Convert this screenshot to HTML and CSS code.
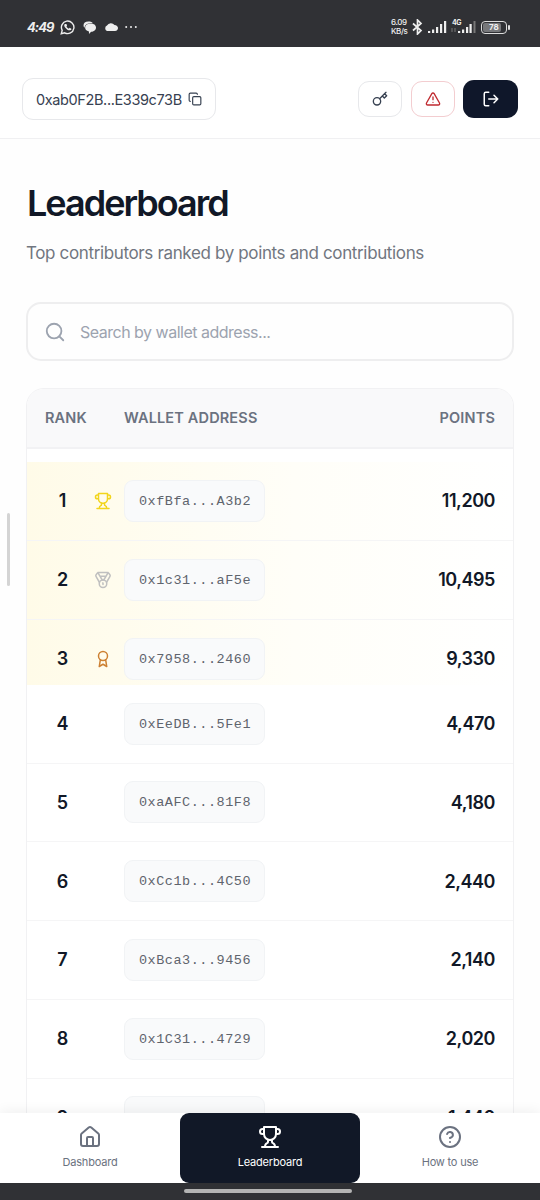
FILE: index.html
```html
<!DOCTYPE html>
<html lang="en">

<head>
    <meta charset="UTF-8">
    <meta name="viewport" content="width=device-width, initial-scale=1.0">
    <title>Leaderboard</title>
    <link rel="stylesheet" href="styles.css">
</head>

<body>
    <div class="status-bar">
        <div class="status-left">
            <span class="clock">4:49</span>
            <svg width="15" height="15" viewBox="0 0 24 24" fill="none" stroke="#eee" stroke-width="2.2">
                <path d="M2 22l1.500-5.500A10 10 0 1 1 7.500 20.500z" />
                <path d="M8 6.500c-1.500 1-2 3 .5 6s5 4.500 7.500 4 2.500-2 2-2.500l-2.500-1.500-1.500 1.500c-1.500-.5-3-2-3.700-3.500L11.300 9l-1-2.500z" fill="#eee" stroke="none" />
            </svg>
            <svg width="13" height="13" viewBox="0 0 24 24" fill="#eee">
                <path d="M10 1C4 1 1 4 1 8c0 2 .5 3.500 2 4.500C3 6.500 8 3.500 18 3.500c-2-2-5-2.500-8-2.500z" />
                <path d="M14 4.500c6 0 10 3 10 7.500s-4 8-9 8l-4 4v-4.500C6 18 4 16 4 12.500c0-5 4-8 10-8z" />
            </svg>
            <svg width="14" height="9" viewBox="0 0 28 18" fill="#eee">
                <path d="M6 18a6 6 0 0 1 0-11 9 9 0 0 1 15-1c4 0 7 3 7 6s-2 6-6 6z" />
            </svg>
            <svg width="12" height="4" viewBox="0 0 12 4" fill="#eee">
                <circle cx="1.200" cy="2" r="1" /><circle cx="6" cy="2" r="1" /><circle cx="10.800" cy="2" r="1" />
            </svg>
        </div>
        <div class="status-right">
            <span class="speed">6.09<br>KB/s</span>
            <svg width="11" height="16" viewBox="0 0 11 16" fill="none" stroke="#eee" stroke-width="1.700">
                <path d="M1 4.500l8 7L5.500 15V1L9 4.500l-8 7" />
            </svg>
            <svg class="signal" width="19" height="12" viewBox="0 0 19 12" fill="#eee">
                <path d="M0 10h2.200v2H0zM4 8.500h2.200V12H4zM8 6h2.200v6H8zM12 3h2.200v9H12zM16 0h2.200v12H16z" />
            </svg>
            <div class="mobile">
                <span class="network">4G</span>
                <svg width="25" height="12" viewBox="0 0 25 12" fill="#eee">
                    <path d="M1 7v4M4 11V7" stroke="#777" />
                    <path d="M7 10h2.200v2H7zM11 8.500h2.200V12H11zM15 6h2.200v6H15zM18.500 3h2.200v9h-2.200z" />
                    <path d="M22.500 0h2v12h-2z" fill="#777" />
                </svg>
            </div>
            <div class="battery"><span>78</span></div>
        </div>
    </div>

    <header class="topbar">
        <button class="wallet-btn">
            <span>0xab0F2B...E339c73B</span>
            <svg class="icon" width="14" height="14" viewBox="0 0 24 24">
                <rect x="8" y="8" width="14" height="14" rx="2" />
                <path d="M4 16c-1.100 0-2-.9-2-2V4c0-1.100.9-2 2-2h10c1.100 0 2 .9 2 2" />
            </svg>
        </button>
        <div class="actions">
            <button class="action">
                <svg class="icon" width="16" height="16" viewBox="0 0 24 24">
                    <circle cx="7.500" cy="15.500" r="5.500" />
                    <path d="M11.400 11.600L21 2M15.500 7.500l3 3L22 7l-3-3" />
                </svg>
            </button>
            <button class="action danger">
                <svg class="icon" width="16" height="16" viewBox="0 0 24 24">
                    <path d="M21.730 18l-8-14a2 2 0 0 0-3.460 0l-8 14A2 2 0 0 0 4 21h16a2 2 0 0 0 1.730-3zM12 9v4M12 17h.01" />
                </svg>
            </button>
            <button class="action logout">
                <svg class="icon" width="18" height="18" viewBox="0 0 24 24">
                    <path d="M9 3H5a2 2 0 0 0-2 2v14a2 2 0 0 0 2 2h4M16 17l5-5-5-5M21 12H9" />
                </svg>
            </button>
        </div>
    </header>

    <main class="content">
        <h1>Leaderboard</h1>
        <p class="subtitle">Top contributors ranked by points and contributions</p>

        <div class="search">
            <svg class="icon" width="22" height="22" viewBox="0 0 24 24">
                <circle cx="11" cy="11" r="8" />
                <path d="M21 21l-4.300-4.300" />
            </svg>
            <input type="text" placeholder="Search by wallet address...">
        </div>

        <div class="board">
            <div class="board-head">
                <span class="head-rank">Rank</span>
                <span class="head-wallet">Wallet Address</span>
                <span class="head-points">Points</span>
            </div>

            <div class="top-three">
                <div class="row">
                    <span class="rank">1</span>
                    <span class="medal gold">
                        <svg class="icon" width="18" height="18" viewBox="0 0 24 24">
                            <path d="M6 9H4.500a2.500 2.500 0 0 1 0-5H6M18 9h1.500a2.500 2.500 0 0 0 0-5H18M4 22h16M10 14.660V17c0 .55-.47.98-.97 1.210C7.850 18.750 7 20.240 7 22M14 14.660V17c0 .55.47.98.97 1.210C16.150 18.750 17 20.240 17 22M18 2H6v7a6 6 0 0 0 12 0V2z" />
                        </svg>
                    </span>
                    <code class="address">0xfBfa...A3b2</code>
                    <span class="points">11,200</span>
                </div>
                <div class="row">
                    <span class="rank">2</span>
                    <span class="medal silver">
                        <svg class="icon" width="18" height="18" viewBox="0 0 24 24">
                            <path d="M7.210 15L2.660 7.140a2 2 0 0 1 .13-2.200L4.400 2.800A2 2 0 0 1 6 2h12a2 2 0 0 1 1.600.8l1.600 2.140a2 2 0 0 1 .14 2.200L16.790 15M11 12L5.120 2.200M13 12l5.880-9.800M8 7h8" />
                            <circle cx="12" cy="17" r="5" />
                            <path d="M12 18v-2h-.5" />
                        </svg>
                    </span>
                    <code class="address">0x1c31...aF5e</code>
                    <span class="points">10,495</span>
                </div>
                <div class="row">
                    <span class="rank">3</span>
                    <span class="medal bronze">
                        <svg class="icon" width="18" height="18" viewBox="0 0 24 24">
                            <circle cx="12" cy="8" r="6" />
                            <path d="M15.480 12.890L17 22l-5-3-5 3 1.520-9.110" />
                        </svg>
                    </span>
                    <code class="address">0x7958...2460</code>
                    <span class="points">9,330</span>
                </div>
            </div>

            <div class="row">
                <span class="rank">4</span>
                <span class="medal"></span>
                <code class="address">0xEeDB...5Fe1</code>
                <span class="points">4,470</span>
            </div>
            <div class="row">
                <span class="rank">5</span>
                <span class="medal"></span>
                <code class="address">0xaAFC...81F8</code>
                <span class="points">4,180</span>
            </div>
            <div class="row">
                <span class="rank">6</span>
                <span class="medal"></span>
                <code class="address">0xCc1b...4C50</code>
                <span class="points">2,440</span>
            </div>
            <div class="row">
                <span class="rank">7</span>
                <span class="medal"></span>
                <code class="address">0xBca3...9456</code>
                <span class="points">2,140</span>
            </div>
            <div class="row">
                <span class="rank">8</span>
                <span class="medal"></span>
                <code class="address">0x1C31...4729</code>
                <span class="points">2,020</span>
            </div>
            <div class="row">
                <span class="rank">9</span>
                <span class="medal"></span>
                <code class="address"></code>
                <span class="points">1,440</span>
            </div>
        </div>
    </main>

    <nav class="bottom-nav">
        <a class="nav-item">
            <svg class="icon" width="24" height="24" viewBox="0 0 24 24">
                <path d="M15 21v-8a1 1 0 0 0-1-1h-4a1 1 0 0 0-1 1v8" />
                <path d="M3 10a2 2 0 0 1 .709-1.528l7-5.999a2 2 0 0 1 2.582 0l7 5.999A2 2 0 0 1 21 10v9a2 2 0 0 1-2 2H5a2 2 0 0 1-2-2z" />
            </svg>
            <span>Dashboard</span>
        </a>
        <a class="nav-item active">
            <svg class="icon" width="24" height="24" viewBox="0 0 24 24">
                <path d="M6 9H4.500a2.500 2.500 0 0 1 0-5H6M18 9h1.500a2.500 2.500 0 0 0 0-5H18M4 22h16M10 14.660V17c0 .55-.47.98-.97 1.210C7.850 18.750 7 20.240 7 22M14 14.660V17c0 .55.47.98.97 1.210C16.150 18.750 17 20.240 17 22M18 2H6v7a6 6 0 0 0 12 0V2z" />
            </svg>
            <span>Leaderboard</span>
        </a>
        <a class="nav-item">
            <svg class="icon" width="24" height="24" viewBox="0 0 24 24">
                <circle cx="12" cy="12" r="10" />
                <path d="M9.090 9a3 3 0 0 1 5.830 1c0 2-3 3-3 3M12 17h.01" />
            </svg>
            <span>How to use</span>
        </a>
    </nav>
    <div class="gesture-bar"><span></span></div>
    <div class="edge-handle"></div>
</body>

</html>
```
FILE: styles.css
```css
* {
    box-sizing: border-box;
}

body {
    margin: 0;
    height: 1200px;
    display: flex;
    flex-direction: column;
    overflow: hidden;
    position: relative;
    background: #fefefe;
    color: #111827;
    font-family: Inter, sans-serif;
}

button {
    font-family: inherit;
    background: #fff;
    cursor: pointer;
}

.icon {
    display: block;
    flex: none;
    fill: none;
    stroke: currentColor;
    stroke-width: 2;
    stroke-linecap: round;
    stroke-linejoin: round;
}

/* phone status bar */
.status-bar {
    flex: none;
    height: 47px;
    padding: 7px 33px 0 27px;
    display: flex;
    align-items: center;
    justify-content: space-between;
    background: #303135;
    color: #eee;
}

.status-left,
.status-right {
    display: flex;
    align-items: center;
}

.status-left {
    gap: 7px;
}

.clock {
    width: 26px;
    font-size: 13px;
    font-weight: 700;
    font-style: italic;
    letter-spacing: -1px;
}

.status-left svg:nth-of-type(2) {
    margin: 0 1px;
}

.status-left svg:nth-of-type(3) {
    margin-top: -2px;
}

.speed {
    width: 21px;
    font-size: 8px;
    line-height: 9px;
    letter-spacing: -0.4px;
    font-weight: 500;
}

.signal {
    margin: 0 4px 0 5px;
}

.mobile {
    display: grid;
}

.mobile > * {
    grid-area: 1 / 1;
}

.mobile svg {
    align-self: center;
}

.network {
    font-size: 7px;
    line-height: 8px;
    font-weight: 700;
    padding: 0 0 9px 1px;
    letter-spacing: -0.5px;
}

.battery {
    position: relative;
    width: 26px;
    height: 13px;
    margin-left: 5px;
    padding: 1px;
    border: 1.5px solid #ddd;
    border-radius: 4px;
    display: flex;
    font-size: 8px;
    font-weight: 700;
}

.battery span {
    width: 18px;
    line-height: 9px;
    padding-left: 6px;
    background: #77787b;
    border-radius: 2px;
}

.battery::after {
    content: "";
    position: absolute;
    right: -4px;
    top: 3px;
    width: 2px;
    height: 5px;
    border-radius: 1px;
    background: #ddd;
}

/* header */
.topbar {
    flex: none;
    height: 92px;
    padding: 31px 22px 0;
    display: flex;
    align-items: flex-start;
    justify-content: space-between;
    background: #fff;
    border-bottom: 1px solid #f0f0f2;
}

.wallet-btn {
    width: 194px;
    height: 42px;
    padding: 0 13px;
    display: flex;
    align-items: center;
    justify-content: space-between;
    border: 1px solid #e7e8eb;
    border-radius: 11px;
    color: #374151;
}

.wallet-btn span {
    font-size: 14.5px;
    letter-spacing: -0.38px;
    white-space: nowrap;
}

.actions {
    display: flex;
    align-items: center;
    gap: 8.5px;
    padding-top: 2px;
}

.action {
    width: 44px;
    height: 36px;
    padding: 0;
    display: flex;
    align-items: center;
    justify-content: center;
    border: 1px solid #e7e8eb;
    border-radius: 11px;
    color: #374151;
}

.danger {
    border-color: #f3cdd0;
    color: #c02a30;
}

.logout {
    width: 55px;
    height: 38px;
    border: none;
    background: #0f172a;
    color: #fff;
}

/* page */
.content {
    flex: 1;
    min-height: 0;
    overflow: hidden;
    padding: 42px 26px 0;
}

h1 {
    margin: 0;
    font-size: 36px;
    line-height: 44px;
    font-weight: 600;
    letter-spacing: -2px;
    padding-left: 1px;
}

.subtitle {
    margin: 15px 0 35px;
    font-size: 17px;
    line-height: 27px;
    letter-spacing: -0.36px;
    color: #717680;
}

.search {
    height: 59px;
    margin-bottom: 27px;
    padding: 0 16px;
    display: flex;
    align-items: center;
    gap: 14px;
    border: 2px solid #eeeeef;
    border-radius: 15px;
    color: #9ca3af;
}

.search input {
    flex: 1;
    border: none;
    outline: none;
    padding: 0;
    background: none;
    font-family: inherit;
    font-size: 16px;
    letter-spacing: -0.5px;
}

.search input::placeholder {
    color: #9ca3af;
}

.board {
    border: 1px solid #f1f1f3;
    border-radius: 18px 18px 0 0;
    background: #fff;
    overflow: hidden;
}

.board-head,
.row {
    display: flex;
    align-items: center;
    padding: 0 18px;
}

.board-head {
    height: 60px;
    margin-bottom: 13px;
    padding-bottom: 1px;
    background: #f9f9fa;
    border-bottom: 2px solid #f2f2f4;
    color: #6b7280;
    font-size: 14.5px;
    font-weight: 600;
    text-transform: uppercase;
    letter-spacing: 0.15px;
}

.head-rank {
    width: 79px;
}

.head-points {
    margin-left: auto;
}

.top-three {
    background: linear-gradient(90deg, #fffbe8, #fffef8 55%, #fff);
}

.row {
    height: 78.75px;
    border-bottom: 1px solid #f5f5f6;
}

.top-three .row:last-child {
    height: 65.25px;
    padding-top: 18px;
    align-items: flex-start;
    border-bottom: none;
    line-height: 42px;
}

.rank {
    width: 35px;
    text-align: center;
    font-size: 18px;
    font-weight: 600;
}

.medal {
    width: 44px;
    padding-left: 13.5px;
}

.top-three .row:last-child .medal {
    padding-top: 12px;
}

.gold {
    color: #f2d51c;
}

.silver {
    color: #c0c0c0;
}

.bronze {
    color: #cd8032;
}

.address {
    width: 141px;
    height: 42px;
    padding-left: 14px;
    line-height: 41px;
    border: 1px solid #f1f3f5;
    border-radius: 9px;
    background: #f9fafb;
    color: #5f646d;
    font-family: "Courier New", "Liberation Mono", monospace;
    font-size: 13.5px;
    letter-spacing: 0.52px;
}

.top-three .row:last-child .address {
    line-height: 41px;
}

.points {
    margin-left: auto;
    font-size: 18px;
    font-weight: 600;
    letter-spacing: -0.45px;
}

/* bottom navigation */
.bottom-nav {
    flex: none;
    height: 70px;
    display: grid;
    grid-template-columns: repeat(3, 1fr);
    background: #fff;
    box-shadow: 0 -2px 12px rgba(0, 0, 0, 0.06);
    position: relative;
}

.nav-item {
    padding-top: 12px;
    display: flex;
    flex-direction: column;
    align-items: center;
    gap: 6px;
    color: #6b7280;
    font-size: 11px;
    line-height: 14px;
    letter-spacing: -0.2px;
}

.nav-item.active {
    background: #111827;
    border-radius: 9px;
    color: #fff;
}

.gesture-bar {
    flex: none;
    height: 17px;
    display: flex;
    justify-content: center;
    padding: 6px 4px 0 0;
    background: #303135;
}

.gesture-bar span {
    width: 168px;
    height: 4px;
    border-radius: 2px;
    background: #b4b4b4;
}

.edge-handle {
    position: absolute;
    left: 7px;
    top: 513px;
    width: 3px;
    height: 73px;
    border-radius: 2px;
    background: #d4d4d4;
}
```
